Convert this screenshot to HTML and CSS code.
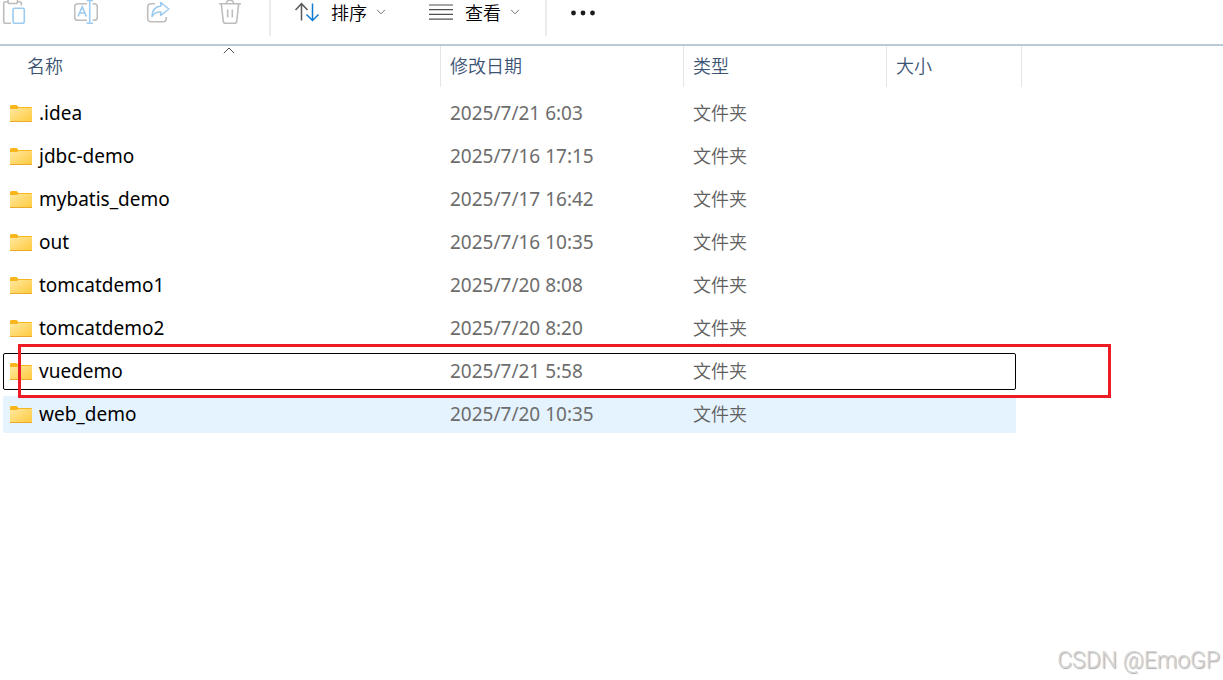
FILE: index.html
```html
<!DOCTYPE html>
<html lang="zh-CN">
<head>
    <meta charset="UTF-8">
    <meta name="viewport" content="width=device-width, initial-scale=1.0">
    <title>文件夹</title>
    <link rel="stylesheet" href="styles.css">
</head>
<body>
    <!-- folder icon shared by every row -->
    <svg class="defs" width="0" height="0" aria-hidden="true">
        <defs>
            <linearGradient id="folderFill" x1="0" y1="0" x2="1" y2="1">
                <stop offset="0" stop-color="#ffe8a0"/>
                <stop offset="1" stop-color="#ffca3c"/>
            </linearGradient>
            <symbol id="folder" viewBox="0 0 22 17">
                <path d="M0 1.5Q0 0 1.2 0H6.5L8.5 2H21Q22 2 22 3V8H0Z" fill="#f8b61c"/>
                <path d="M0 4H7L8.5 3H22V17H0Z" fill="url(#folderFill)"/>
                <path d="M0 16H22V16.4Q22 17 21.3 17H.7Q0 17 0 16.4Z" fill="#eba92b"/>
            </symbol>
        </defs>
    </svg>

    <div class="toolbar">
        <div class="group actions">
            <button class="tool" aria-label="粘贴" disabled>
                <svg viewBox="0 0 24 24" width="24" height="24" fill="none" stroke-width="1.6">
                    <path d="M9 23.3H3.5Q1.7 23.3 1.7 21.5V3.5Q1.7 1.7 3.5 1.7H6M16 1.7H17.5Q19.3 1.7 19.3 3.5V5.5" stroke="#bdbdbd"/>
                    <rect x="6" y="-1" width="9.5" height="4.500" rx="1.8" stroke="#bdbdbd"/>
                    <rect x="11" y="8.2" width="11.3" height="15.1" rx="1.8" stroke="#9ccbef"/>
                </svg>
            </button>
            <button class="tool" aria-label="重命名" disabled>
                <svg viewBox="0 0 24 24" width="24" height="24" fill="none" stroke-width="1.6">
                    <path d="M13 3.7H4Q.7 3.7 .7 7V17Q.7 20.3 4 20.3H13M18.5 3.7H20Q23.3 3.7 23.3 7V17Q23.3 20.3 20 20.3H18.5" stroke="#bdbdbd"/>
                    <path d="M4 16.5L8.2 6.7L12.4 16.5M5.5 13H10.9M15.7 .5V23.2M12.5 .5H19M12.5 23.3H19" stroke="#9ccbef"/>
                </svg>
            </button>
            <button class="tool" aria-label="共享" disabled>
                <svg viewBox="0 0 24 24" width="24" height="24" fill="none" stroke-width="1.6" stroke-linejoin="round">
                    <path d="M9 3.7H5Q1.7 3.7 1.7 7V18.5Q1.7 21.8 5 21.8H17Q20.3 21.8 20.3 18.5V17" stroke="#bdbdbd"/>
                    <path d="M14.8 2.5L22.8 9L14.8 15.5V12Q9 11.5 6 16.5Q6.3 7 14.8 6Z" stroke="#9ccbef"/>
                </svg>
            </button>
            <button class="tool" aria-label="删除" disabled>
                <svg viewBox="0 0 24 24" width="24" height="24" fill="none" stroke="#bdbdbd" stroke-width="1.6">
                    <path d="M1 3.7H23M8.5 3.5Q8.5 .3 12 .3Q15.5 .3 15.5 3.5M3.3 4L5.3 21.5Q5.6 23.3 7.3 23.3H16.7Q18.4 23.3 18.7 21.5L20.7 4M9.7 9.5V17.5M14.3 9.5V17.5"/>
                </svg>
            </button>
        </div>
        <div class="group menus">
            <button class="tool">
                <svg viewBox="0 0 24 24" width="24" height="24" fill="none" stroke-width="1.5">
                    <path d="M6.5 20.5V4M.5 10L6.5 3.7L12.5 10" stroke="#5a5a5a"/>
                    <path d="M17.5 3.5V20M11.5 14.5L17.5 20.5L23.5 14.5" stroke="#0f7bd0"/>
                </svg>
                <span>排序</span>
                <svg class="chevron" viewBox="0 0 10 6" width="10" height="6" fill="none" stroke="#707070"><path d="M1 .8L5 4.8L9 .8"/></svg>
            </button>
            <button class="tool">
                <svg viewBox="0 0 24 24" width="24" height="24" fill="none" stroke="#505050" stroke-width="1.2">
                    <path d="M0 5H24M0 9.7H24M0 14.4H24M0 19.1H24"/>
                </svg>
                <span>查看</span>
                <svg class="chevron" viewBox="0 0 10 6" width="10" height="6" fill="none" stroke="#707070"><path d="M1 .8L5 4.8L9 .8"/></svg>
            </button>
        </div>
        <div class="group">
            <button class="tool" aria-label="更多">
                <svg viewBox="0 0 24 24" width="24" height="24" fill="#1b1b1b">
                    <circle cx="2.5" cy="13" r="2.4"/><circle cx="12" cy="13" r="2.4"/><circle cx="21.5" cy="13" r="2.4"/>
                </svg>
            </button>
        </div>
    </div>

    <table class="files">
        <thead>
            <tr>
                <th>
                    名称
                    <svg class="sort-mark" viewBox="0 0 12 7" width="12" height="7" fill="none" stroke="#505050"><path d="M.8 6.2L6 1L11.2 6.2"/></svg>
                </th>
                <th>修改日期</th>
                <th>类型</th>
                <th>大小</th>
            </tr>
        </thead>
        <tbody>
            <tr>
                <td class="name"><svg width="22" height="17"><use href="#folder"/></svg>.idea</td>
                <td>2025/7/21 6:03</td>
                <td class="type">文件夹</td>
                <td></td>
            </tr>
            <tr>
                <td class="name"><svg width="22" height="17"><use href="#folder"/></svg>jdbc-demo</td>
                <td>2025/7/16 17:15</td>
                <td class="type">文件夹</td>
                <td></td>
            </tr>
            <tr>
                <td class="name"><svg width="22" height="17"><use href="#folder"/></svg>mybatis_demo</td>
                <td>2025/7/17 16:42</td>
                <td class="type">文件夹</td>
                <td></td>
            </tr>
            <tr>
                <td class="name"><svg width="22" height="17"><use href="#folder"/></svg>out</td>
                <td>2025/7/16 10:35</td>
                <td class="type">文件夹</td>
                <td></td>
            </tr>
            <tr>
                <td class="name"><svg width="22" height="17"><use href="#folder"/></svg>tomcatdemo1</td>
                <td>2025/7/20 8:08</td>
                <td class="type">文件夹</td>
                <td></td>
            </tr>
            <tr>
                <td class="name"><svg width="22" height="17"><use href="#folder"/></svg>tomcatdemo2</td>
                <td>2025/7/20 8:20</td>
                <td class="type">文件夹</td>
                <td></td>
            </tr>
            <tr class="focused">
                <td class="name"><svg width="22" height="17"><use href="#folder"/></svg>vuedemo</td>
                <td>2025/7/21 5:58</td>
                <td class="type">文件夹</td>
                <td></td>
            </tr>
            <tr class="hovered">
                <td class="name"><svg width="22" height="17"><use href="#folder"/></svg>web_demo</td>
                <td>2025/7/20 10:35</td>
                <td class="type">文件夹</td>
                <td></td>
            </tr>
        </tbody>
    </table>

    <div class="watermark">CSDN @EmoGP</div>
</body>
</html>
```
FILE: styles.css
```css
* {
    box-sizing: border-box;
}

body {
    margin: 0;
    min-height: 100vh;
    position: relative;
    background: #fff;
    color: #000;
    font-family: "Noto Sans", "Noto Sans CJK SC", sans-serif;
    font-size: 18px;
}

.defs {
    position: absolute;
}

.toolbar {
    display: flex;
    height: 46px;
    border-bottom: 2px solid #bccad8;
}

.group {
    display: flex;
    height: 36px;
    padding: 0 24px;
    border-right: 2px solid #ebebeb;
}

.group:last-child {
    border-right: none;
}

.actions {
    gap: 48px;
    padding: 0 27px 0 2px;
}

.menus {
    gap: 43px;
    padding-right: 25px;
}

.tool {
    display: flex;
    align-items: center;
    height: 24px;
    padding: 0;
    border: none;
    background: none;
    color: #000;
    font-family: "Noto Sans CJK SC", sans-serif;
    font-size: 18px;
    font-weight: 350;
    line-height: 24px;
}

.tool span {
    margin: 0 9px 0 12px;
}

.files {
    display: block;
    padding-left: 3px;
    border-spacing: 0;
}

.files thead {
    display: block;
}

.files tr {
    display: grid;
    grid-template-columns: 438px 243px 203px 135px;
}

.files th {
    position: relative;
    height: 41px;
    padding: 0 9px;
    border-right: 1px solid #e5e5e5;
    color: #3c5474;
    font-weight: 350;
    line-height: 41px;
    text-align: left;
}

.files th:first-child {
    padding-left: 24px;
}

.sort-mark {
    position: absolute;
    top: 1px;
    left: calc(50% + 1px);
}

.files tbody {
    display: flex;
    flex-direction: column;
    align-items: flex-start;
    gap: 6px;
    padding-top: 8px;
}

.files tbody tr {
    position: relative;
    grid-template-columns: 438px 243px 203px 129px;
    border-radius: 2px;
}

.files td {
    height: 37px;
    padding: 0 9px;
    color: #6d6d6d;
    font-size: 19px;
    line-height: 37px;
}

.files .name {
    display: flex;
    align-items: center;
    gap: 7px;
    padding: 0 7px;
    color: #000;
}

.files .type {
    color: #606060;
    font-size: 18px;
    font-weight: 350;
}

.focused {
    outline: 1px solid #000;
    outline-offset: -1px;
}

/* red frame drawn over the highlighted row */
.focused::after {
    content: "";
    position: absolute;
    z-index: 1;
    top: -9px;
    right: -95px;
    bottom: -8px;
    left: 15px;
    border: 3px solid #ed1c24;
}

.hovered {
    background: #e5f3ff;
}

.watermark {
    position: absolute;
    right: 3px;
    bottom: 4px;
    color: #d4d4d4;
    font-family: Roboto, sans-serif;
    font-size: 23px;
    font-weight: 300;
    line-height: 30px;
    text-shadow: 1px 1px 1px #aaa;
}
```
